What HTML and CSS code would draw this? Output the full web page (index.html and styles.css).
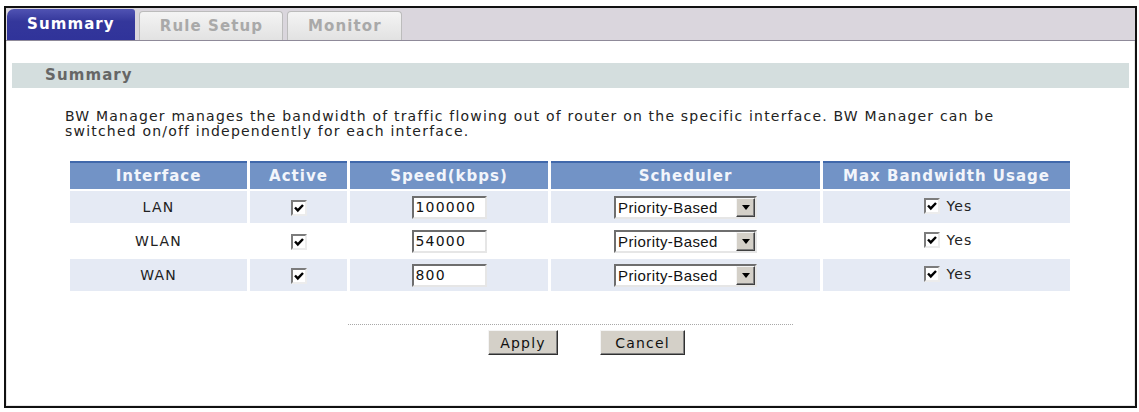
FILE: index.html
```html
<!DOCTYPE html>
<html>
<head>
<meta charset="utf-8">
<title>BW Manager Summary</title>
<link rel="stylesheet" href="styles.css">
</head>
<body>
<div class="frame">
  <div class="tabbar">
    <div class="tab active">Summary</div>
    <div class="tab">Rule Setup</div>
    <div class="tab">Monitor</div>
  </div>
  <div class="content">
    <div class="section-title">Summary</div>
    <p class="desc">BW Manager manages the bandwidth of traffic flowing out of router on the specific interface. BW Manager can be<br>switched on/off independently for each interface.</p>
    <table class="grid">
      <thead>
        <tr>
          <th class="c-if">Interface</th>
          <th class="c-act">Active</th>
          <th class="c-spd">Speed(kbps)</th>
          <th class="c-sch">Scheduler</th>
          <th class="c-max">Max Bandwidth Usage</th>
        </tr>
      </thead>
      <tbody>
        <tr class="odd">
          <td>LAN</td>
          <td><span class="cb"><svg viewBox="0 0 12 12" width="12" height="12"><path d="M2 5.5 L4.8 8.4 L10 3" fill="none" stroke="#000" stroke-width="2.4"/></svg></span></td>
          <td><input class="txt" type="text" value="100000"></td>
          <td><div class="select"><span class="sel-text">Priority-Based</span><span class="sel-btn"><svg viewBox="0 0 8 5" width="8" height="5"><path d="M0 0 H8 L4 5 Z" fill="#000"/></svg></span></div></td>
          <td><span class="yes"><span class="cb"><svg viewBox="0 0 12 12" width="12" height="12"><path d="M2 5.5 L4.8 8.4 L10 3" fill="none" stroke="#000" stroke-width="2.4"/></svg></span>Yes</span></td>
        </tr>
        <tr>
          <td>WLAN</td>
          <td><span class="cb"><svg viewBox="0 0 12 12" width="12" height="12"><path d="M2 5.5 L4.8 8.4 L10 3" fill="none" stroke="#000" stroke-width="2.4"/></svg></span></td>
          <td><input class="txt" type="text" value="54000"></td>
          <td><div class="select"><span class="sel-text">Priority-Based</span><span class="sel-btn"><svg viewBox="0 0 8 5" width="8" height="5"><path d="M0 0 H8 L4 5 Z" fill="#000"/></svg></span></div></td>
          <td><span class="yes"><span class="cb"><svg viewBox="0 0 12 12" width="12" height="12"><path d="M2 5.5 L4.8 8.4 L10 3" fill="none" stroke="#000" stroke-width="2.4"/></svg></span>Yes</span></td>
        </tr>
        <tr class="odd">
          <td>WAN</td>
          <td><span class="cb"><svg viewBox="0 0 12 12" width="12" height="12"><path d="M2 5.5 L4.8 8.4 L10 3" fill="none" stroke="#000" stroke-width="2.4"/></svg></span></td>
          <td><input class="txt" type="text" value="800"></td>
          <td><div class="select"><span class="sel-text">Priority-Based</span><span class="sel-btn"><svg viewBox="0 0 8 5" width="8" height="5"><path d="M0 0 H8 L4 5 Z" fill="#000"/></svg></span></div></td>
          <td><span class="yes"><span class="cb"><svg viewBox="0 0 12 12" width="12" height="12"><path d="M2 5.5 L4.8 8.4 L10 3" fill="none" stroke="#000" stroke-width="2.4"/></svg></span>Yes</span></td>
        </tr>
      </tbody>
    </table>
    <div class="actions">
      <div class="divider"></div>
      <div class="buttons">
        <button class="btn btn-apply">Apply</button>
        <button class="btn btn-cancel">Cancel</button>
      </div>
    </div>
  </div>
</div>
</body>
</html>
```
FILE: styles.css
```css
html, body {
  margin: 0;
  padding: 0;
  background: #fff;
}
body {
  font-family: "DejaVu Sans", Verdana, sans-serif;
  font-size: 14px;
  color: #222;
}
.frame {
  margin: 6px 2px 0 4px;
  border: 2px solid #111;
  height: 398px;
  box-sizing: content-box;
  display: flex;
  flex-direction: column;
}
.tabbar {
  height: 32px;
  background: #dad6dd;
  border-bottom: 1px solid #8f8a99;
  display: flex;
  align-items: flex-end;
  gap: 4px;
  padding-left: 1px;
}
.tab {
  height: 28px;
  line-height: 28px;
  padding: 0 19px 0 20px;
  font-weight: bold;
  font-size: 15px;
  letter-spacing: 1.1px;
  color: #a9a9a9;
  background: linear-gradient(#f4f4f4, #e2e2e2);
  border: 1px solid #bcbcbc;
  border-bottom: 0;
  border-radius: 4px 4px 0 0;
}
.tab.active {
  height: 31px;
  line-height: 31px;
  color: #fff;
  background: linear-gradient(#5053b3, #34379b 40%, #30339a);
  border: 0;
  border-radius: 7px 3px 0 0;
  padding: 0 20px;
}
.content {
  flex: 1;
  border: 1px solid #e8e8e8;
  border-top: 0;
  padding-top: 22px;
}
.section-title {
  margin: 0 5px;
  height: 25px;
  line-height: 25px;
  background: #d4dede;
  padding-left: 33px;
  font-weight: bold;
  font-size: 15px;
  letter-spacing: 1.1px;
  color: #666;
}
.desc {
  margin: 21px 0 0 58px;
  line-height: 15px;
  letter-spacing: 1.2px;
  color: #222;
}
.grid {
  margin: 20px 0 0 60px;
  border-spacing: 3px 2px;
  table-layout: fixed;
}
.grid th {
  padding: 0;
  line-height: 26px;
  border-top: 2px solid #4068ab;
  background: #7293c6;
  color: #f2f5fb;
  font-weight: bold;
  font-size: 15px;
  letter-spacing: 1px;
  text-align: center;
}
.c-if { width: 177px; }
.c-act { width: 97px; }
.c-spd { width: 198px; }
.c-sch { width: 269px; }
.c-max { width: 247px; }
.grid td {
  padding: 0;
  height: 32px;
  text-align: center;
  vertical-align: middle;
  letter-spacing: 1.2px;
  color: #222;
}
.grid tr.odd td {
  background: #e5eaf4;
}
.cb {
  display: inline-block;
  width: 12px;
  height: 12px;
  background: #fff;
  border: 2px solid;
  border-color: #7c7c7c #ececec #ececec #7c7c7c;
  vertical-align: middle;
  line-height: 0;
}
.cb svg {
  display: block;
}
.txt {
  box-sizing: border-box;
  width: 75px;
  height: 23px;
  margin: 0;
  padding: 0 0 0 2px;
  border: 2px solid;
  border-color: #6e6e6e #e6e6e6 #e6e6e6 #6e6e6e;
  background: #fff;
  font-family: "DejaVu Sans", Verdana, sans-serif;
  font-size: 14px;
  letter-spacing: 1.2px;
  color: #111;
  vertical-align: middle;
  outline: none;
}
.select {
  box-sizing: border-box;
  display: inline-flex;
  align-items: center;
  justify-content: space-between;
  width: 143px;
  height: 23px;
  border: 2px solid;
  border-color: #6e6e6e #e6e6e6 #e6e6e6 #6e6e6e;
  background: #fff;
  vertical-align: middle;
  padding-left: 2px;
}
.sel-text {
  font-family: "Liberation Sans", Arial, sans-serif;
  font-size: 15px;
  letter-spacing: 0.4px;
  color: #111;
}
.sel-btn {
  box-sizing: border-box;
  width: 19px;
  height: 19px;
  background: #d4d0c8;
  border: 1px solid;
  border-color: #f4f4f4 #404040 #404040 #f4f4f4;
  box-shadow: inset -1px -1px 0 #808080;
  display: flex;
  align-items: center;
  justify-content: center;
}
.sel-btn svg {
  display: block;
}
.yes {
  display: inline-flex;
  align-items: center;
  gap: 6px;
  padding-left: 4px;
}
.actions {
  margin-top: 31px;
}
.divider {
  width: 445px;
  margin: 0 auto;
  border-top: 1px dotted #a8a8a8;
}
.buttons {
  display: flex;
  justify-content: center;
  gap: 42px;
  margin-top: 5px;
  padding-left: 32px;
}
.btn {
  height: 25px;
  margin: 0;
  padding: 0;
  background: #d4d0c8;
  border: 1px solid;
  border-color: #f4f4f4 #303030 #303030 #f4f4f4;
  box-shadow: inset -1px -1px 0 #808080;
  font-family: "DejaVu Sans", Verdana, sans-serif;
  font-size: 14px;
  letter-spacing: 1.2px;
  color: #111;
}
.btn-apply { width: 70px; }
.btn-cancel { width: 85px; }
```
